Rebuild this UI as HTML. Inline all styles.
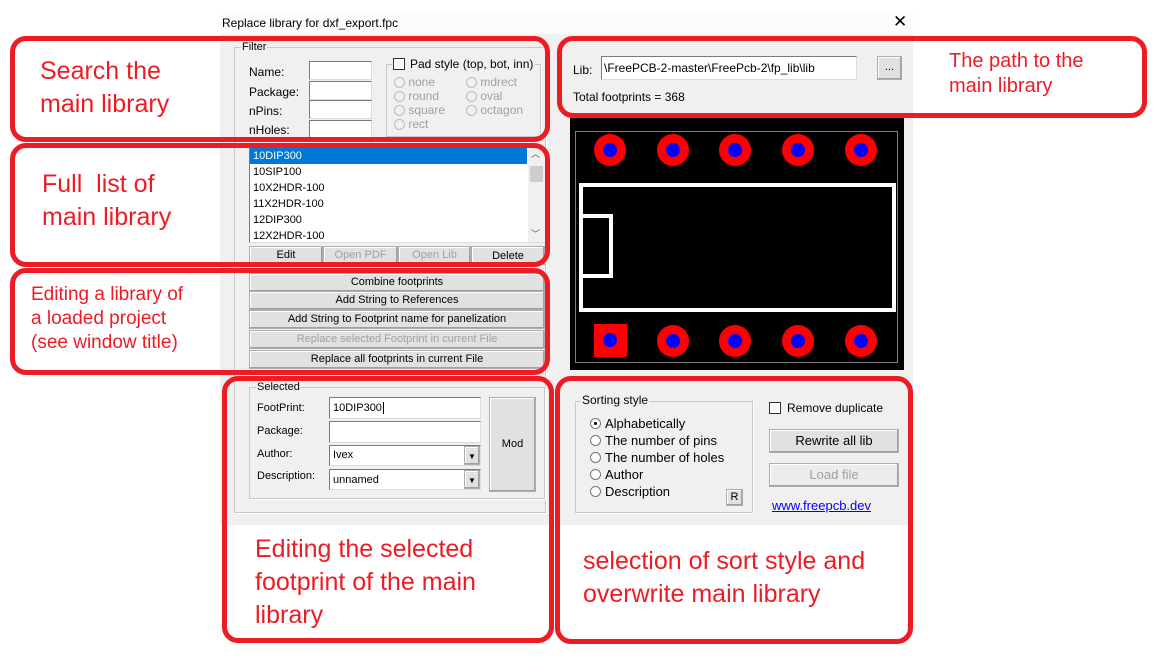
<!DOCTYPE html>
<html><head><meta charset="utf-8"><style>
*{box-sizing:border-box;margin:0;padding:0}
body{width:1158px;height:658px;background:#fff;position:relative;overflow:hidden;font-family:"Liberation Sans",sans-serif;font-size:11px;color:#000}
.a{position:absolute}
.dlg{left:220px;top:12px;width:693px;height:513px;background:#f0f0f0}
.title{left:220px;top:12px;width:693px;height:22px;background:#fbfcfe}
.in{position:absolute;background:#fff;border:1px solid #7a7a7a;border-right-color:#dcdcdc;border-bottom-color:#dcdcdc}
.btn{position:absolute;background:#e1e1e1;border:1px solid #adadad;text-align:center;font-size:11px;line-height:17px;height:19px;box-shadow:inset -1px -1px 0 #a0a0a0,inset 1px 1px 0 #fff}
.dis{color:#a0a0a0}
.grp{position:absolute;border:1px solid #c8c8c8;box-shadow:1px 1px 0 #fff}
.gl{position:absolute;background:#f0f0f0;padding:0 1px;font-size:11px}
.rb{position:absolute;width:11px;height:11px;border-radius:50%;border:1px solid #999;background:#fff}
.red{position:absolute;border:5px solid #ed1c24;border-radius:16px}
.rt{position:absolute;color:#ed1c24;font-size:25px;line-height:33px}
.pad{position:absolute;width:32px;height:32px;border-radius:50%;background:#f00}
.pad i{position:absolute;left:9px;top:9px;width:14px;height:14px;border-radius:50%;background:#00f}
</style></head><body>
<div class="a dlg"></div>
<div class="a title"></div>
<div class="a" style="left:222px;top:16px;font-size:12px">Replace library for dxf_export.fpc</div>
<div class="a" style="left:893px;top:12px;font-size:17px">✕</div>

<div class="grp" style="left:234px;top:47px;width:312px;height:466px"></div>
<div class="gl" style="left:241px;top:41px">Filter</div>
<div class="a" style="left:249px;top:65px;font-size:12px">Name:</div>
<div class="a" style="left:249px;top:85px;font-size:12px">Package:</div>
<div class="a" style="left:249px;top:104px;font-size:12px">nPins:</div>
<div class="a" style="left:249px;top:123px;font-size:12px">nHoles:</div>
<div class="in" style="left:309px;top:61px;width:63px;height:19px"></div>
<div class="in" style="left:309px;top:81px;width:63px;height:19px"></div>
<div class="in" style="left:309px;top:100px;width:63px;height:19px"></div>
<div class="in" style="left:309px;top:120px;width:63px;height:19px"></div>
<div class="grp" style="left:386px;top:64px;width:155px;height:73px"></div>
<div class="gl" style="left:392px;top:57px;padding-right:2px;font-size:12px"><span style="display:inline-block;width:12px;height:12px;border:1px solid #333;background:#fff;vertical-align:-2px;margin-right:5px"></span>Pad style (top, bot, inn)</div>
<div class="a dis" style="left:394px;top:75px;line-height:14px;font-size:12px">
<div><span class="rb" style="position:relative;display:inline-block;vertical-align:-2px;border-color:#bbb;background:#f0f0f0"></span> none</div>
<div><span class="rb" style="position:relative;display:inline-block;vertical-align:-2px;border-color:#bbb;background:#f0f0f0"></span> round</div>
<div><span class="rb" style="position:relative;display:inline-block;vertical-align:-2px;border-color:#bbb;background:#f0f0f0"></span> square</div>
<div><span class="rb" style="position:relative;display:inline-block;vertical-align:-2px;border-color:#bbb;background:#f0f0f0"></span> rect</div></div>
<div class="a dis" style="left:466px;top:75px;line-height:14px;font-size:12px">
<div><span class="rb" style="position:relative;display:inline-block;vertical-align:-2px;border-color:#bbb;background:#f0f0f0"></span> mdrect</div>
<div><span class="rb" style="position:relative;display:inline-block;vertical-align:-2px;border-color:#bbb;background:#f0f0f0"></span> oval</div>
<div><span class="rb" style="position:relative;display:inline-block;vertical-align:-2px;border-color:#bbb;background:#f0f0f0"></span> octagon</div></div>

<div class="in" style="left:249px;top:147px;width:296px;height:96px;line-height:16px;padding-left:0">
<div style="background:#0078d7;color:#fff;width:277px;padding-left:3px">10DIP300</div>
<div style="padding-left:3px">10SIP100</div><div style="padding-left:3px">10X2HDR-100</div><div style="padding-left:3px">11X2HDR-100</div><div style="padding-left:3px">12DIP300</div><div style="padding-left:3px">12X2HDR-100</div>
<div class="a" style="left:278px;top:0;width:17px;height:94px;background:#f0f0f0"></div>
<div class="a" style="left:280px;top:18px;width:13px;height:16px;background:#cdcdcd"></div>
<div class="a" style="left:281px;top:-2px;font-size:9px;color:#555">︿</div>
<div class="a" style="left:281px;top:78px;font-size:9px;color:#555">﹀</div>
</div>
<div class="btn" style="left:249px;top:246px;width:74px">Edit</div>
<div class="btn dis" style="left:323px;top:246px;width:75px">Open PDF</div>
<div class="btn dis" style="left:398px;top:246px;width:73px">Open Lib</div>
<div class="btn" style="left:471px;top:246px;width:74px;line-height:19px">Delete</div>
<div class="btn" style="left:249px;top:273px;width:296px">Combine footprints</div>
<div class="btn" style="left:249px;top:291px;width:296px">Add String to References</div>
<div class="btn" style="left:249px;top:310px;width:296px">Add String to Footprint name for panelization</div>
<div class="btn dis" style="left:249px;top:330px;width:296px">Replace selected Footprint in current File</div>
<div class="btn" style="left:249px;top:350px;width:296px">Replace all footprints in current File</div>

<div class="grp" style="left:249px;top:387px;width:296px;height:112px"></div>
<div class="gl" style="left:256px;top:381px">Selected</div>
<div class="a" style="left:257px;top:402px">FootPrint:</div>
<div class="a" style="left:257px;top:425px">Package:</div>
<div class="a" style="left:257px;top:448px">Author:</div>
<div class="a" style="left:257px;top:470px">Description:</div>
<div class="in" style="left:329px;top:397px;width:152px;height:22px;padding:4px 3px">10DIP300<span style="border-left:1px solid #000;margin-left:1px"></span></div>
<div class="in" style="left:329px;top:421px;width:152px;height:22px"></div>
<div class="in" style="left:329px;top:445px;width:152px;height:21px;padding:3px 3px">Ivex<div class="btn" style="right:0;top:0;width:16px;height:19px;font-size:8px;line-height:19px">▼</div></div>
<div class="in" style="left:329px;top:469px;width:152px;height:21px;padding:4px 3px">unnamed<div class="btn" style="right:0;top:0;width:16px;height:19px;font-size:8px;line-height:19px">▼</div></div>
<div class="btn" style="left:489px;top:397px;width:47px;height:95px;line-height:92px">Mod</div>

<div class="a" style="left:573px;top:63px;font-size:12px">Lib:</div>
<div class="in" style="left:601px;top:56px;width:256px;height:24px;padding:4px 2px;font-size:12px;overflow:hidden;white-space:nowrap">\FreePCB-2-master\FreePcb-2\fp_lib\lib</div>
<div class="btn" style="left:877px;top:56px;width:25px;height:24px;line-height:20px">...</div>
<div class="a" style="left:573px;top:90px;font-size:12px">Total footprints = 368</div>

<div class="a" style="left:570px;top:118px;width:334px;height:252px;background:#000"></div>
<div class="a" style="left:575px;top:131px;width:323px;height:232px;border:1px solid #808080"></div>
<div class="a" style="left:579px;top:183px;width:317px;height:129px;border:4px solid #fff"></div>
<div class="a" style="left:579px;top:214px;width:34px;height:64px;border:4px solid #fff;border-left:none"></div>
<div class="pad" style="left:594px;top:134px"><i></i></div>
<div class="pad" style="left:657px;top:134px"><i></i></div>
<div class="pad" style="left:719px;top:134px"><i></i></div>
<div class="pad" style="left:782px;top:134px"><i></i></div>
<div class="pad" style="left:845px;top:134px"><i></i></div>
<div class="pad" style="left:594px;top:324px;border-radius:0;width:33px;height:33px"><i></i></div>
<div class="pad" style="left:657px;top:325px"><i></i></div>
<div class="pad" style="left:719px;top:325px"><i></i></div>
<div class="pad" style="left:782px;top:325px"><i></i></div>
<div class="pad" style="left:845px;top:325px"><i></i></div>

<div class="grp" style="left:575px;top:401px;width:178px;height:112px"></div>
<div class="gl" style="left:581px;top:393px;font-size:12px">Sorting style</div>
<div class="a" style="left:590px;top:415px;font-size:13px;line-height:17px">
<div><span class="rb" style="position:relative;display:inline-block;vertical-align:-1px;margin-right:4px;border-color:#777"><b style="position:absolute;left:3px;top:3px;width:3px;height:3px;background:#000;border-radius:50%"></b></span>Alphabetically</div>
<div><span class="rb" style="position:relative;display:inline-block;vertical-align:-1px;margin-right:4px;border-color:#777"></span>The number of pins</div>
<div><span class="rb" style="position:relative;display:inline-block;vertical-align:-1px;margin-right:4px;border-color:#777"></span>The number of holes</div>
<div><span class="rb" style="position:relative;display:inline-block;vertical-align:-1px;margin-right:4px;border-color:#777"></span>Author</div>
<div><span class="rb" style="position:relative;display:inline-block;vertical-align:-1px;margin-right:4px;border-color:#777"></span>Description</div></div>
<div class="btn" style="left:726px;top:489px;width:17px;height:17px;line-height:15px">R</div>
<div class="a" style="left:769px;top:402px;width:12px;height:12px;border:1px solid #333;background:#fff"></div>
<div class="a" style="left:787px;top:401px;font-size:12px">Remove duplicate</div>
<div class="btn" style="left:769px;top:429px;width:130px;height:24px;line-height:21px;font-size:13px">Rewrite all lib</div>
<div class="btn dis" style="left:769px;top:463px;width:130px;height:24px;line-height:21px;font-size:13px;background:#ececec">Load file</div>
<div class="a" style="left:772px;top:498px;font-size:13px;color:#00f;text-decoration:underline">www.freepcb.dev</div>

<div class="red" style="left:10px;top:36px;width:540px;height:106px"></div>
<div class="red" style="left:10px;top:143px;width:540px;height:124px"></div>
<div class="red" style="left:10px;top:268px;width:540px;height:107px"></div>
<div class="red" style="left:222px;top:376px;width:332px;height:267px"></div>
<div class="red" style="left:557px;top:36px;width:590px;height:82px"></div>
<div class="red" style="left:555px;top:376px;width:358px;height:268px"></div>
<div class="rt" style="left:40px;top:55px">Search the<br>main library</div>
<div class="rt" style="left:42px;top:168px">Full&nbsp; list of<br>main library</div>
<div class="rt" style="left:31px;top:283px;font-size:19px;line-height:24px">Editing a library of<br>a loaded project<br>(see window title)</div>
<div class="rt" style="left:255px;top:533px">Editing the selected<br>footprint of the main<br>library</div>
<div class="rt" style="left:949px;top:49px;font-size:20px;line-height:25px">The path to the<br>main library</div>
<div class="rt" style="left:583px;top:545px">selection of sort style and<br>overwrite main library</div>
</body></html>
